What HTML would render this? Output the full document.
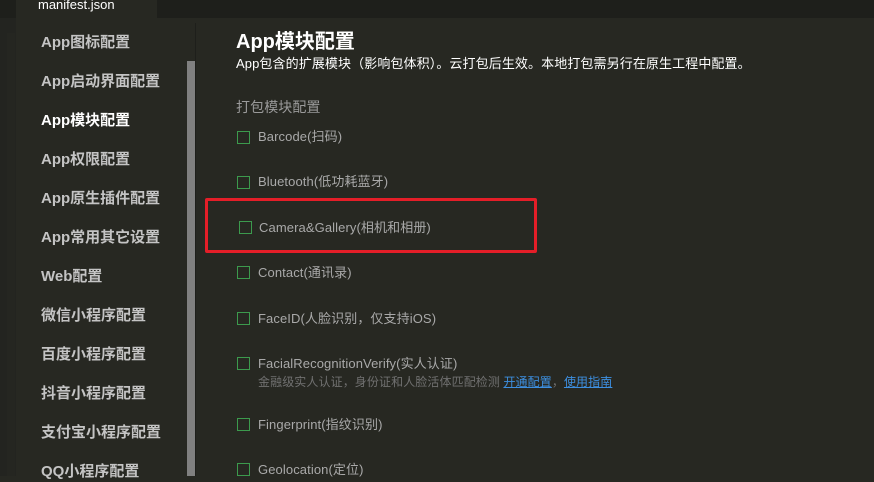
<!DOCTYPE html>
<html><head><meta charset="utf-8"><style>
*{margin:0;padding:0;box-sizing:border-box}
body{width:874px;height:476px;overflow:hidden;background:#272822;font-family:"Liberation Sans","Noto Sans CJK SC",sans-serif;position:relative}
.top{position:absolute;left:0;top:0;width:874px;height:18px;background:#1e1f1b}
.tab{position:absolute;left:16px;top:0;width:141px;height:18px;background:#272822;color:#fff;font-size:13px;padding-left:22px;line-height:10px}
.strip{position:absolute;left:0;top:18px;width:16px;height:458px;background:#232420}
.strip2{position:absolute;left:7px;top:33px;width:8px;height:443px;background:#252621}
.side{position:absolute;left:16px;top:18px;width:179px;height:458px;background:#272822}
.sb{position:absolute;left:187px;top:61px;width:8px;height:415px;background:#808080}
.div{position:absolute;left:195px;top:23px;width:1px;height:453px;background:#1e1f1b}
.si{position:absolute;left:41px;font-size:15px;font-weight:bold;color:#c4c4c4;line-height:20px}
.t{position:absolute;color:#fff}
.cb{position:absolute;width:13px;height:13px;border:1px solid #3c9a4d}
.lbl{position:absolute;font-size:13px;color:#a9a9a9;line-height:16px;letter-spacing:0.1px}
a{color:#3d8fe0;text-decoration:underline}
</style></head><body>
<div class="top"></div>
<div class="tab">manifest.json</div>
<div class="strip"></div><div class="strip2"></div>
<div class="side"></div>
<div class="sb"></div><div class="div"></div>
<div class="si" style="top:33px">App图标配置</div>
<div class="si" style="top:72px">App启动界面配置</div>
<div class="si" style="top:111px;color:#fff">App模块配置</div>
<div class="si" style="top:150px">App权限配置</div>
<div class="si" style="top:189px">App原生插件配置</div>
<div class="si" style="top:228px">App常用其它设置</div>
<div class="si" style="top:267px">Web配置</div>
<div class="si" style="top:306px">微信小程序配置</div>
<div class="si" style="top:345px">百度小程序配置</div>
<div class="si" style="top:384px">抖音小程序配置</div>
<div class="si" style="top:423px">支付宝小程序配置</div>
<div class="si" style="top:462px">QQ小程序配置</div>
<div class="t" style="left:236px;top:29px;font-size:20px;font-weight:bold;line-height:26px">App模块配置</div>
<div class="t" style="left:236px;top:56px;font-size:13px;line-height:16px;letter-spacing:0.1px">App包含的扩展模块（影响包体积）。云打包后生效。本地打包需另行在原生工程中配置。</div>
<div class="lbl" style="left:236px;top:99px;font-size:14px;color:#9a9a9a">打包模块配置</div>
<div class="cb" style="left:237px;top:131px"></div><div class="lbl" style="left:258px;top:129px">Barcode(扫码)</div>
<div class="cb" style="left:237px;top:176px"></div><div class="lbl" style="left:258px;top:174px">Bluetooth(低功耗蓝牙)</div>
<div style="position:absolute;left:205px;top:198px;width:332px;height:55px;border:3px solid #e41e28;border-radius:2px"></div>
<div class="cb" style="left:239px;top:221px"></div><div class="lbl" style="left:259px;top:220px">Camera&amp;Gallery(相机和相册)</div>
<div class="cb" style="left:237px;top:266px"></div><div class="lbl" style="left:258px;top:265px">Contact(通讯录)</div>
<div class="cb" style="left:237px;top:312px"></div><div class="lbl" style="left:258px;top:311px">FaceID(人脸识别，仅支持iOS)</div>
<div class="cb" style="left:237px;top:357px"></div><div class="lbl" style="left:258px;top:356px">FacialRecognitionVerify(实人认证)</div>
<div class="lbl" style="left:258px;top:374px;font-size:12px;color:#707070">金融级实人认证，身份证和人脸活体匹配检测 <a>开通配置</a>，<a>使用指南</a></div>
<div class="cb" style="left:237px;top:418px"></div><div class="lbl" style="left:258px;top:417px">Fingerprint(指纹识别)</div>
<div class="cb" style="left:237px;top:463px"></div><div class="lbl" style="left:258px;top:462px">Geolocation(定位)</div>
</body></html>
